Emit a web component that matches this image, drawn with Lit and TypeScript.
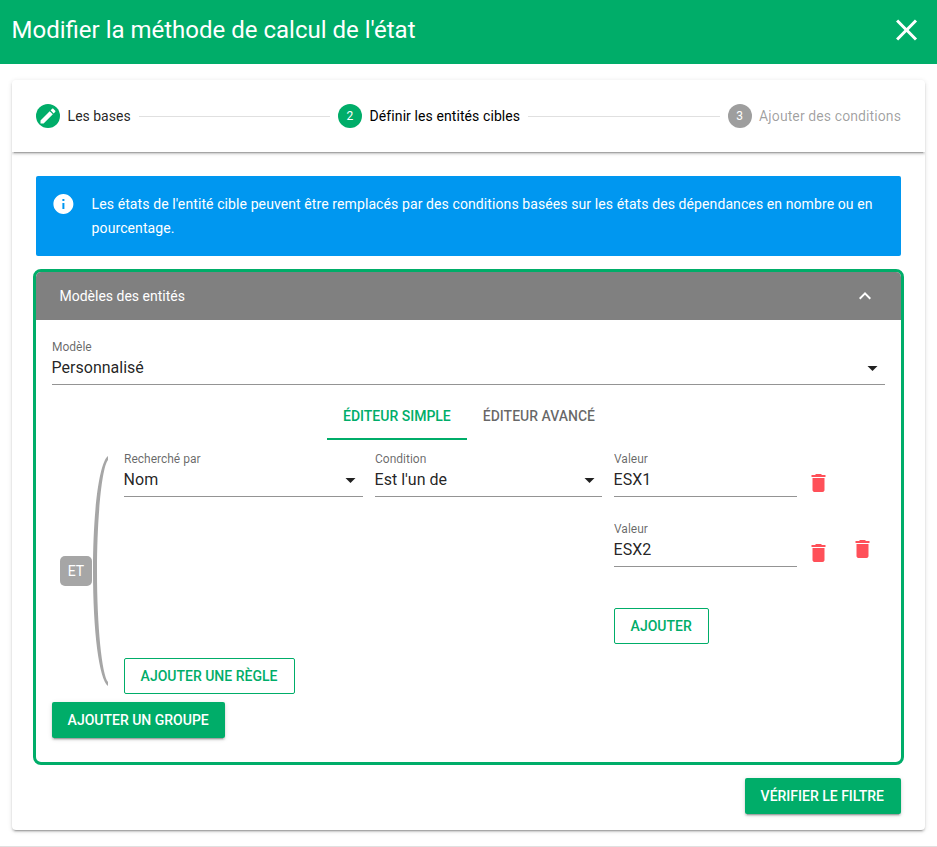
import { LitElement, html, css, nothing } from "lit";
import { customElement, property } from "lit/decorators.js";

const ICONS: Record<string, string> = {
  close: "M19 6.41L17.59 5 12 10.59 6.41 5 5 6.41 10.59 12 5 17.59 6.41 19 12 13.41 17.59 19 19 17.59 13.41 12z",
  edit: "M20.71 7.04c.39-.39.39-1.04 0-1.41l-2.34-2.34c-.37-.39-1.02-.39-1.41 0l-1.84 1.83 3.75 3.75M3 17.25V21h3.75L17.81 9.93l-3.75-3.75L3 17.25z",
  info: "M12 2C6.48 2 2 6.48 2 12s4.48 10 10 10 10-4.48 10-10S17.52 2 12 2zm1 15h-2v-6h2v6zm0-8h-2V7h2v2z",
  up: "M7.41 15.41L12 10.83l4.59 4.58L18 14l-6-6-6 6z",
  down: "M7 10l5 5 5-5z",
  trash: "M6 19c0 1.1.9 2 2 2h8c1.1 0 2-.9 2-2V7H6v12zM19 4h-3.5l-1-1h-5l-1 1H5v2h14V4z",
};

const ORIGIN: Record<string, number> = { close: 0.3, down: 0.5, trash: 0.5, info: -0.4 };

@customElement("ui-icon")
class UiIcon extends LitElement {
  @property() name = "close";
  static styles = css`
    :host { display: block; width: 24px; height: 24px; flex: none; }
    svg { display: block; width: 100%; height: 100%; fill: currentColor; }
  `;
  render() {
    return html`<svg viewBox="${ORIGIN[this.name] ?? 0} 0 24 24"><path d=${ICONS[this.name]} /></svg>`;
  }
}

@customElement("ui-field")
class UiField extends LitElement {
  @property() label = "";
  @property() value = "";
  @property({ type: Boolean }) select = false;
  static styles = css`
    :host { display: block; box-sizing: border-box; height: 46px; border-bottom: 1px solid #949494; }
    .label { height: 16px; font-size: 12px; line-height: 16px; color: rgba(0, 0, 0, 0.6); }
    .row { display: flex; justify-content: space-between; height: 24px; padding-top: 1px; }
    .value { margin-left: -0.4px; font-size: 16px; line-height: 24px; color: rgba(0, 0, 0, 0.87); }
    .arrow { color: rgba(0, 0, 0, 0.87); }
  `;
  render() {
    return html`
      <div class="label">${this.label}</div>
      <div class="row">
        <span class="value">${this.value}</span>
        ${this.select ? html`<ui-icon class="arrow" name="down"></ui-icon>` : nothing}
      </div>
    `;
  }
}

@customElement("app-root")
class AppRoot extends LitElement {
  static styles = css`
    :host {
      display: flex; flex-direction: column; box-sizing: border-box; height: 847px;
      background: #fff; font-family: Roboto, sans-serif; font-size: 14px; color: rgba(0, 0, 0, 0.87);
      border-bottom: 1px solid #e0e0e0; overflow: hidden;
    }
    .bar {
      display: flex; justify-content: space-between; align-items: center; box-sizing: border-box;
      height: 64px; padding: 0 12px 4px 11.5px; background: #00ad69; color: #fff; flex: none;
    }
    .title { font-size: 24px; line-height: 32px; }
    .close { width: 36px; height: 36px; }
    .card {
      margin: 16px 12px 0; height: 750px; border-radius: 4px; overflow: hidden;
      box-shadow: 0 3px 1px -2px rgba(0,0,0,.2), 0 2px 2px 0 rgba(0,0,0,.14), 0 1px 5px 0 rgba(0,0,0,.12);
    }
    .steps {
      display: flex; align-items: center; gap: 8px; height: 72px; padding: 0 24px;
      box-shadow: 0 3px 1px -2px rgba(0,0,0,.2), 0 2px 2px 0 rgba(0,0,0,.14), 0 1px 5px 0 rgba(0,0,0,.12);
    }
    .step { display: flex; align-items: center; gap: 7.6px; line-height: 24px; }
    .active { color: #000; letter-spacing: 0.09px; }
    .idle { color: rgba(0, 0, 0, 0.38); letter-spacing: 0.1px; }
    .dot {
      display: flex; align-items: center; justify-content: center; width: 24px; height: 24px;
      border-radius: 50%; background: #00ad69; color: #fff; font-size: 12px; letter-spacing: 0;
    }
    .idle .dot { background: #9e9e9e; }
    .dot ui-icon { width: 20px; height: 20px; }
    .rule { flex: 1; height: 1px; background: #e0e0e0; }
    .content { padding: 24px 24px 0; }
    .alert {
      display: flex; gap: 16px; box-sizing: border-box; height: 80px; padding: 16px; border-radius: 2px;
      background: #0097f0; color: #fff; line-height: 24px; letter-spacing: 0.098px;
    }
    .alert ui-icon { margin: 0 0 0 -1px; }
    .alert p { margin: 0 0 0 0.6px; }
    .panel {
      box-sizing: border-box; height: 496px; margin: 13px -3px 0; border: 3px solid #00ad69;
      border-radius: 8px; overflow: hidden;
    }
    .head {
      display: flex; justify-content: space-between; align-items: center; height: 48px;
      padding: 0 24px 0 23.5px; background: #808080; color: #fff;
    }
    .body { padding: 19px 16px 0; }
    .tabs { display: flex; justify-content: center; margin: 7px 0 0; padding-left: 1px; }
    .tab {
      box-sizing: border-box; height: 48px; padding: 0 16px; border-bottom: 2px solid transparent;
      line-height: 48px; font-weight: 500; color: rgba(0, 0, 0, 0.6);
    }
    .tab.on { color: #00ad69; border-color: #00ad69; }
    .group { display: flex; height: 243px; margin-top: 11px; padding-left: 8px; }
    .op {
      width: 32px; height: 30px; margin-top: 105px; border-radius: 5px; background: #a6a6a6;
      color: #fff; line-height: 30px; text-align: center;
    }
    .brace { width: 16px; height: 230px; margin: 5px 0 0 1px; }
    .rules { display: flex; flex-direction: column; justify-content: space-between; width: 761px; margin-left: 15px; }
    .line { display: grid; grid-template-columns: 239px 227px 211px auto; column-gap: 12px; }
    .values { display: flex; flex-direction: column; align-items: flex-start; }
    .entry { display: flex; gap: 10px; height: 70px; }
    .entry ui-field { width: 183px; }
    .entry ui-icon { margin-top: 20px; }
    .red { color: #ff5059; }
    .drop { margin: 86px 0 0 14px; }
    .btn {
      display: inline-block; box-sizing: border-box; height: 36px; padding: 0 16.4px 0 15.6px; border-radius: 2px;
      line-height: 36px; font-size: 14px; font-weight: 500; white-space: nowrap;
    }
    .outline { border: 1px solid #00ad69; color: #00ad69; line-height: 34px; align-self: flex-start; }
    .solid {
      background: #00ad69; color: #fff;
      box-shadow: 0 3px 1px -2px rgba(0,0,0,.2), 0 2px 2px 0 rgba(0,0,0,.14), 0 1px 5px 0 rgba(0,0,0,.12);
    }
    .add { margin-top: 17px; }
    .more { margin-top: 8px; }
    .foot { display: flex; justify-content: flex-end; margin-top: 13px; }
    .check { width: 156px; }
  `;

  render() {
    return html`
      <header class="bar">
        <span class="title">Modifier la méthode de calcul de l'état</span>
        <ui-icon class="close" name="close"></ui-icon>
      </header>
      <main class="card">
        <nav class="steps">
          <div class="step"><span class="dot"><ui-icon name="edit"></ui-icon></span>Les bases</div>
          <div class="rule"></div>
          <div class="step active"><span class="dot">2</span>Définir les entités cibles</div>
          <div class="rule"></div>
          <div class="step idle"><span class="dot">3</span>Ajouter des conditions</div>
        </nav>
        <div class="content">
          <div class="alert">
            <ui-icon name="info"></ui-icon>
            <p>Les états de l'entité cible peuvent être remplacés par des conditions basées sur les états des dépendances en nombre ou en pourcentage.</p>
          </div>
          <section class="panel">
            <div class="head"><span>Modèles des entités</span><ui-icon name="up"></ui-icon></div>
            <div class="body">
              <ui-field label="Modèle" value="Personnalisé" select></ui-field>
              <div class="tabs">
                <span class="tab on">ÉDITEUR SIMPLE</span>
                <span class="tab">ÉDITEUR AVANCÉ</span>
              </div>
              <div class="group">
                <span class="op">ET</span>
                <svg class="brace" viewBox="0 0 16 230">
                  <path fill="#a6a6a6" d="M15 0C6 7 0 55 0 115S6 223 15 230V226C9 219 4 170 4 115S9 11 15 4Z" />
                </svg>
                <div class="rules">
                  <div class="line">
                    <ui-field label="Recherché par" value="Nom" select></ui-field>
                    <ui-field label="Condition" value="Est l'un de" select></ui-field>
                    <div class="values">
                      ${["ESX1", "ESX2"].map(
                        (v) => html`<div class="entry">
                          <ui-field label="Valeur" .value=${v}></ui-field>
                          <ui-icon class="red" name="trash"></ui-icon>
                        </div>`
                      )}
                      <span class="btn outline add">AJOUTER</span>
                    </div>
                    <ui-icon class="red drop" name="trash"></ui-icon>
                  </div>
                  <span class="btn outline">AJOUTER UNE RÈGLE</span>
                </div>
              </div>
              <span class="btn solid more">AJOUTER UN GROUPE</span>
            </div>
          </section>
          <div class="foot"><span class="btn solid check">VÉRIFIER LE FILTRE</span></div>
        </div>
      </main>
    `;
  }
}
